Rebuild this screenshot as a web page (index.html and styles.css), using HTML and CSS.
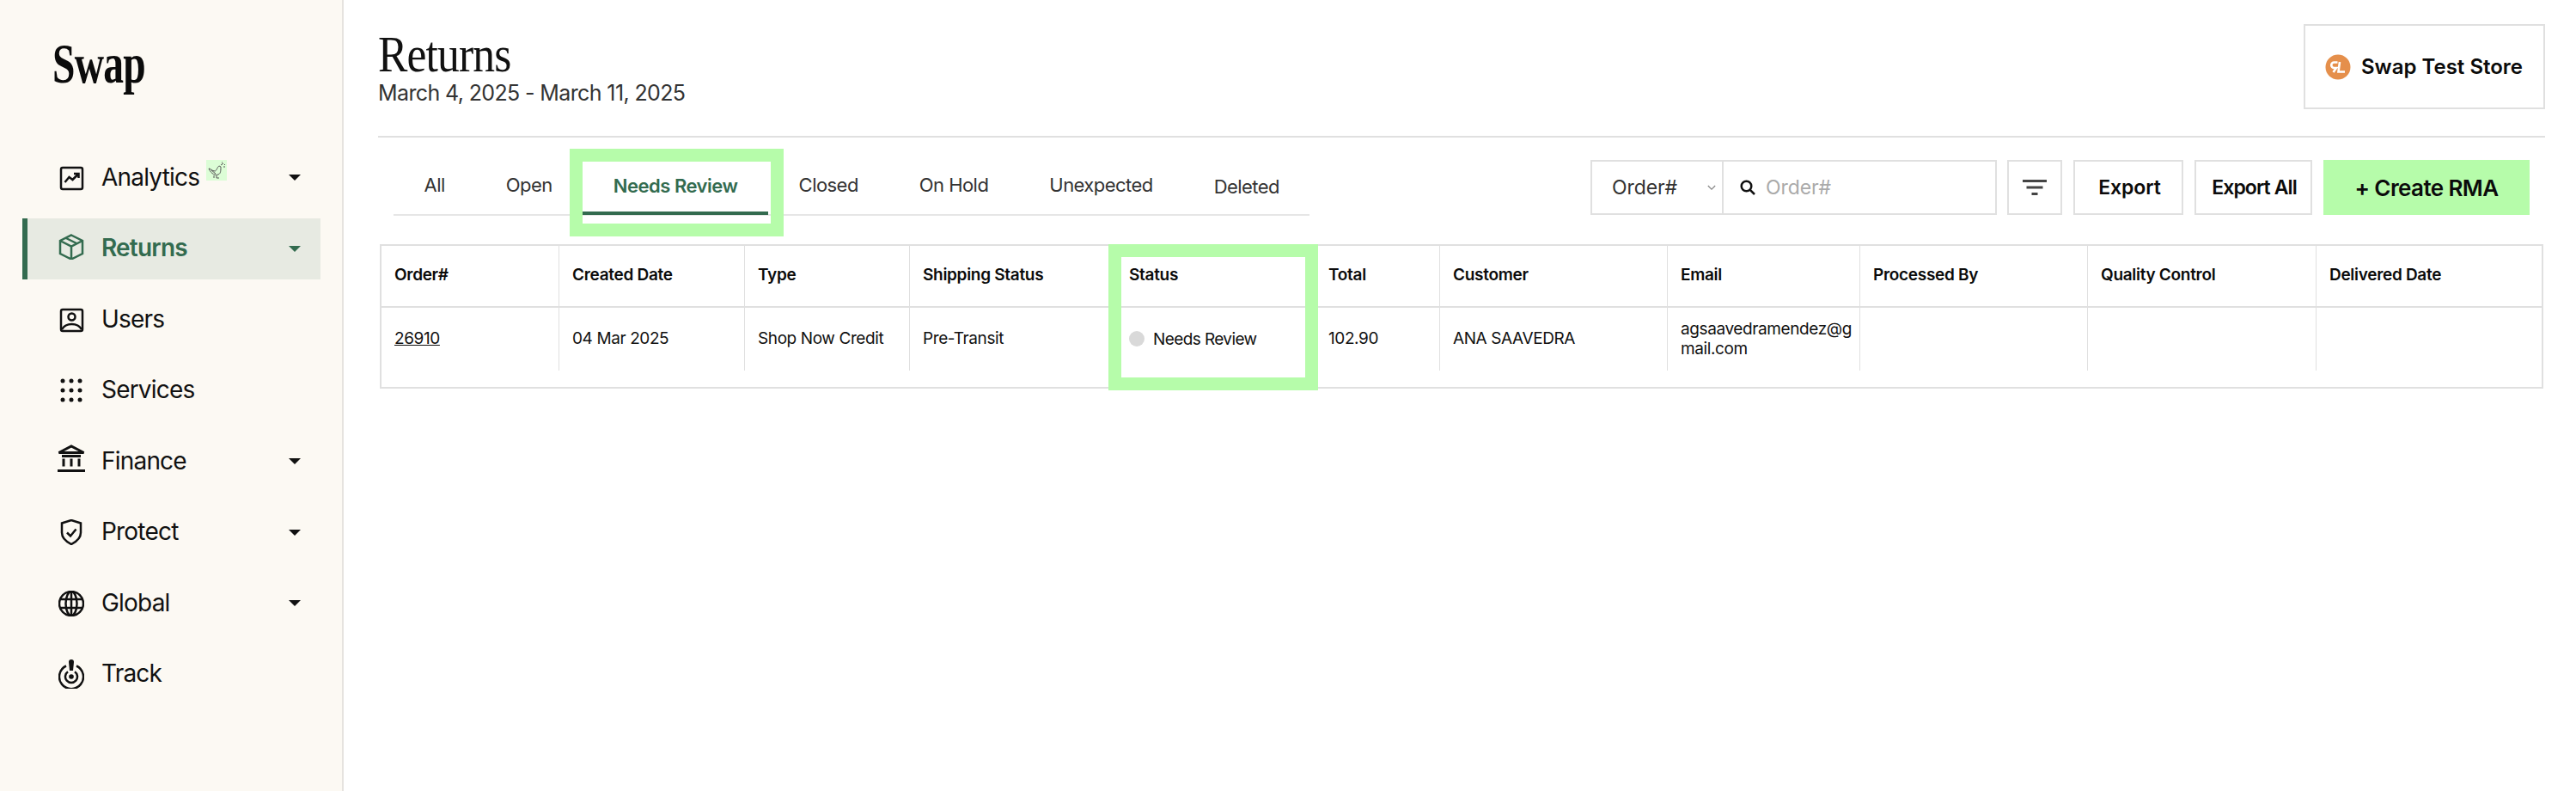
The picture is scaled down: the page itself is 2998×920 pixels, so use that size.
FILE: index.html
```html
<!DOCTYPE html>
<html lang="en">
<head>
<meta charset="utf-8">
<title>Returns</title>
<link rel="stylesheet" href="styles.css">
</head>
<body>
<aside class="sidebar">
  <div class="logo"><span class="logo-text">Swap</span></div>
  <nav class="nav">
    <a class="nav-item">
      <svg class="nav-icon" viewBox="0 0 30 30"><rect x="3" y="3" width="25" height="25" rx="2"/><path d="M7.500 20l5-6 4 3 6.500-6.500M18 10h5.500v5"/></svg>
      <span class="nav-label">Analytics</span>
      <span class="duck"><svg viewBox="0 0 24 24"><path d="M3 10c2 0 4 3 7 3 2 0 3-5 5-6l2 1c0 4 0 8-3 9s-8 0-11-7zM6 12l5 4M9 18v3M12 18v3h3"/><path class="speck" d="M17 6l3-2M20 8h2M18 3h1M21 5l1 1"/></svg></span>
      <span class="caret"></span>
    </a>
    <a class="nav-item active">
      <svg class="nav-icon icon-up" viewBox="0 0 30 30"><path d="M15 1.500L28 8v15l-13 6.500L2 23V8zM2 8l13 6.500L28 8M15 14.500v15M8 4.500l13 6.500"/></svg>
      <span class="nav-label">Returns</span>
      <span class="caret"></span>
    </a>
    <a class="nav-item">
      <svg class="nav-icon" viewBox="0 0 30 30"><rect x="3" y="3" width="25" height="25" rx="2"/><circle cx="15.500" cy="11.500" r="4"/><path d="M4 26c3-5 7-6 11.500-6s8.500 1 11.500 6"/></svg>
      <span class="nav-label">Users</span>
    </a>
    <a class="nav-item">
      <svg class="nav-icon dots" viewBox="0 0 30 30"><circle cx="5" cy="4" r="2.500"/><circle cx="15" cy="4" r="2.500"/><circle cx="25" cy="4" r="2.500"/><circle cx="5" cy="15" r="2.500"/><circle cx="15" cy="15" r="2.500"/><circle cx="25" cy="15" r="2.500"/><circle cx="5" cy="26" r="2.500"/><circle cx="15" cy="26" r="2.500"/><circle cx="25" cy="26" r="2.500"/></svg>
      <span class="nav-label">Services</span>
    </a>
    <a class="nav-item">
      <svg class="nav-icon wide" viewBox="0 0 32 32"><path class="thick" d="M1.500 9.500h29L16 2zM0 30.500h32"/><path class="thick" d="M5 13.500h22M7 16.500v9M16 16.500v9M25 16.500v9"/></svg>
      <span class="nav-label">Finance</span>
      <span class="caret"></span>
    </a>
    <a class="nav-item">
      <svg class="nav-icon" viewBox="0 0 30 30"><path d="M15 1l11 3.500v11c0 6-5 10.500-11 13.500C9 26 4 21.500 4 15.500v-11zM10 15.500l4 4 6.500-8"/></svg>
      <span class="nav-label">Protect</span>
      <span class="caret"></span>
    </a>
    <a class="nav-item">
      <svg class="nav-icon" viewBox="0 0 30 30"><circle cx="15" cy="15" r="14"/><ellipse cx="15" cy="15" rx="6.500" ry="14"/><path d="M2 10h26M2 20h26M15 1v28"/></svg>
      <span class="nav-label">Global</span>
      <span class="caret"></span>
    </a>
    <a class="nav-item">
      <svg class="nav-icon tall" viewBox="0 0 30 34"><path d="M9 7.500A14 14 0 1 0 21 7.500M11 14.300A7 7 0 1 0 19 14.300"/><path class="fill" d="M12 3a3 3 0 0 1 6 0l-1 10h-4z"/><circle class="fill" cx="15" cy="20" r="2.800"/></svg>
      <span class="nav-label">Track</span>
    </a>
  </nav>
</aside>
<main class="main">
  <header class="page-head">
    <div class="titles">
      <h1 class="title">Returns</h1>
      <p class="dates">March 4, 2025 - March 11, 2025</p>
    </div>
    <div class="store">
      <svg class="store-icon" viewBox="0 0 30 30"><circle cx="15" cy="15" r="14.500" fill="#e58f4b"/><path d="M14.500 9.500H10.500a3 3 0 0 0 0 6.500h2.500L9.500 21M17 9l-1.500 11.500H23" fill="none" stroke="#fff" stroke-width="2.600"/></svg>
      <span>Swap Test Store</span>
    </div>
  </header>
  <section class="bar">
    <div class="tabs">
      <a class="tab">All</a>
      <a class="tab">Open</a>
      <a class="tab tab-active">Needs Review</a>
      <a class="tab">Closed</a>
      <a class="tab">On Hold</a>
      <a class="tab">Unexpected</a>
      <a class="tab tab-deleted">Deleted</a>
      <span class="mark mark-tab"></span>
    </div>
    <div class="tools">
      <div class="search">
        <div class="search-select"><span>Order#</span><svg class="chev" viewBox="0 0 12 8"><path d="M1 1l5 5 5-5"/></svg></div>
        <div class="search-input">
          <svg class="lens" viewBox="0 0 18 18"><circle cx="7.500" cy="7.500" r="5.800"/><path d="M11.800 11.800L17 17"/></svg>
          <span>Order#</span>
        </div>
      </div>
      <button class="btn btn-filter"><svg viewBox="0 0 28 18"><path d="M0 1.500h28M4.500 9h19M10.500 16.500h7"/></svg></button>
      <button class="btn btn-export">Export</button>
      <button class="btn btn-exportall">Export All</button>
      <button class="btn btn-create">+ Create RMA</button>
    </div>
  </section>
  <section class="table-wrap">
    <div class="table">
      <div class="row head">
        <div class="cell">Order#</div>
        <div class="cell">Created Date</div>
        <div class="cell">Type</div>
        <div class="cell">Shipping Status</div>
        <div class="cell">Status</div>
        <div class="cell">Total</div>
        <div class="cell">Customer</div>
        <div class="cell">Email</div>
        <div class="cell">Processed By</div>
        <div class="cell">Quality Control</div>
        <div class="cell">Delivered Date</div>
      </div>
      <div class="row body">
        <div class="cell"><a class="order-link">26910</a></div>
        <div class="cell">04 Mar 2025</div>
        <div class="cell">Shop Now Credit</div>
        <div class="cell">Pre-Transit</div>
        <div class="cell status"><span class="dot"></span>Needs Review</div>
        <div class="cell">102.90</div>
        <div class="cell">ANA SAAVEDRA</div>
        <div class="cell email">agsaavedramendez@gmail.com</div>
        <div class="cell"></div>
        <div class="cell"></div>
        <div class="cell"></div>
      </div>
    </div>
    <span class="mark mark-status"></span>
  </section>
</main>
</body>
</html>
```
FILE: styles.css
```css
* { box-sizing: border-box; }
html, body { margin: 0; height: 100%; }
body {
  display: flex;
  min-height: 920px;
  font-family: "Inter", "Liberation Sans", sans-serif;
  color: #111;
  background: #fff;
}
.sidebar {
  width: 400px;
  flex: none;
  background: #fcf9f3;
  border-right: 2px solid #e6e3df;
  padding-left: 26px;
}
.logo { height: 171px; padding: 38px 0 0 35px; }
.logo-text {
  display: inline-block;
  font: 700 66px/72px "Liberation Serif", serif;
  color: #0b0b0b;
  letter-spacing: -1px;
  transform: scaleX(.72);
  transform-origin: left center;
}
.nav { display: flex; flex-direction: column; gap: 11.500px; width: 347px; }
.nav-item {
  display: flex;
  align-items: center;
  height: 71px;
  padding-left: 42px;
  font-size: 28px;
  letter-spacing: -.8px;
  color: #111;
}
.nav-item.active {
  background: #e7eae2;
  border-left: 6px solid #336b4f;
  padding-left: 36px;
  color: #336b4f;
  font-weight: 600;
}
.nav-icon {
  width: 30px;
  height: 30px;
  flex: none;
  margin-right: 20px;
  fill: none;
  stroke: currentColor;
  stroke-width: 2.500;
}
.nav-icon .fill { fill: currentColor; stroke: none; }
.nav-icon.dots { fill: currentColor; stroke: none; }
.nav-icon.icon-up { margin-bottom: 5px; }
.nav-icon.wide { width: 32px; height: 32px; margin: 0 19px 8px -1px; }
.nav-icon .thick { stroke-width: 3; }
.nav-icon.tall { height: 34px; }
.nav-label { line-height: 36px; padding-bottom: 2px; }
.duck {
  width: 24px;
  height: 24px;
  margin: -18px 0 0 8px;
  background: #dcfdd6;
  display: block;
}
.duck svg { width: 24px; height: 24px; fill: none; stroke: #555; stroke-width: 1; display: block; }
.caret {
  margin-left: auto;
  margin-right: 23px;
  width: 0;
  height: 0;
  border-left: 7px solid transparent;
  border-right: 7px solid transparent;
  border-top: 7px solid currentColor;
}
.main { flex: 1; min-width: 0; padding: 0 36px 0 40px; }
.page-head {
  height: 160px;
  border-bottom: 2px solid #e0e0e0;
  display: flex;
  justify-content: space-between;
  padding-top: 28px;
}
.title {
  margin: 4px 0 0;
  font: 400 60px/62px "Liberation Serif", serif;
  letter-spacing: -1px;
  transform: scaleX(.86);
  transform-origin: left center;
}
.dates { margin: -1px 0 0; font-size: 25px; line-height: 30px; color: #333; letter-spacing: -.62px; }
.store {
  width: 281px;
  height: 99px;
  border: 2px solid #e0e0e0;
  display: flex;
  align-items: center;
  padding-left: 23px;
  gap: 12px;
  font-size: 24px;
  font-weight: 600;
  color: #0b0b0b;
}
.store-icon { width: 30px; height: 30px; flex: none; }
.bar {
  display: flex;
  justify-content: space-between;
  align-items: flex-end;
  height: 90px;
  padding: 0 18px;
}
.tabs {
  display: flex;
  position: relative;
  align-items: center;
  height: 65px;
  margin-bottom: -1px;
  border-bottom: 2px solid #e6e6e6;
  font-size: 22px;
  letter-spacing: -.55px;
  color: #333;
}
.tab { padding: 0 35.500px 6px; white-space: nowrap; }
.tab-active {
  height: 65px;
  display: flex;
  align-items: center;
  padding: 0 35.500px;
  color: #336b4f;
  font-weight: 600;
  letter-spacing: -.5px;
  border-bottom: 4px solid #336b4f;
  width: 216px;
  justify-content: center;
}
.tab-deleted { padding-bottom: 2px; }
.mark { position: absolute; border: 15px solid #b6fcaa; pointer-events: none; }
.mark-tab { left: 205px; top: -13px; width: 249px; height: 102px; }
.tools { display: flex; gap: 13px; height: 64px; }
.search { display: flex; width: 473px; margin-right: -1px; border: 2px solid #e0e0e0; font-size: 23px; letter-spacing: -.1px; }
.search-select {
  width: 153px;
  border-right: 2px solid #e0e0e0;
  display: flex;
  align-items: center;
  padding-left: 23px;
  color: #333;
}
.chev { width: 10px; height: 7px; margin-left: auto; margin-right: 7px; fill: none; stroke: #888; stroke-width: 1.500; }
.search-input { flex: 1; display: flex; align-items: center; padding-left: 19px; gap: 12px; color: #aaa; }
.lens { width: 18px; height: 18px; fill: none; stroke: #111; stroke-width: 2.500; }
.btn {
  height: 64px;
  background: #fff;
  border: 2px solid #e0e0e0;
  font: 600 23px "Inter", "Liberation Sans", sans-serif;
  color: #0b0b0b;
  padding: 0;
}
.btn-filter { width: 64px; display: flex; align-items: center; justify-content: center; }
.btn-filter svg { width: 28px; height: 18px; fill: none; stroke: #444; stroke-width: 3; }
.btn-export { width: 128px; padding-left: 3px; letter-spacing: -.1px; }
.btn-exportall { width: 137px; letter-spacing: -.9px; padding-left: 2px; }
.btn-create { width: 240px; background: #b6fcaa; border: 0; font-size: 26px; letter-spacing: -.6px; }
.table-wrap { position: relative; margin: 34px 2px 0; height: 168px; }
.table { border: 2px solid #e0e0e0; height: 168px; }
.row { display: grid; grid-template-columns: 206px 216px 192px 240px 232px 145px 265px 224px 265px 266px 1fr; }
.head { height: 72px; border-bottom: 2px solid #e0e0e0; font-size: 19px; font-weight: 600; color: #0b0b0b; letter-spacing: -.3px; }
.body { height: 73px; font-size: 19px; color: #111; letter-spacing: -.4px; }
.cell {
  display: flex;
  align-items: center;
  padding: 0 8px 3px 15px;
  border-left: 1px solid #e0e0e0;
  min-width: 0;
}
.cell:first-child { border-left: 0; }
.email { word-break: break-all; line-height: 23px; display: block; padding-top: 13px; }
.order-link { text-decoration: underline; }
.status { letter-spacing: -.6px; padding-bottom: 1px; }
.dot { width: 18px; height: 18px; border-radius: 50%; background: #d9d9d9; margin-right: 10px; flex: none; }
.mark-status { left: 848px; top: 0; width: 244px; height: 170px; }
```
